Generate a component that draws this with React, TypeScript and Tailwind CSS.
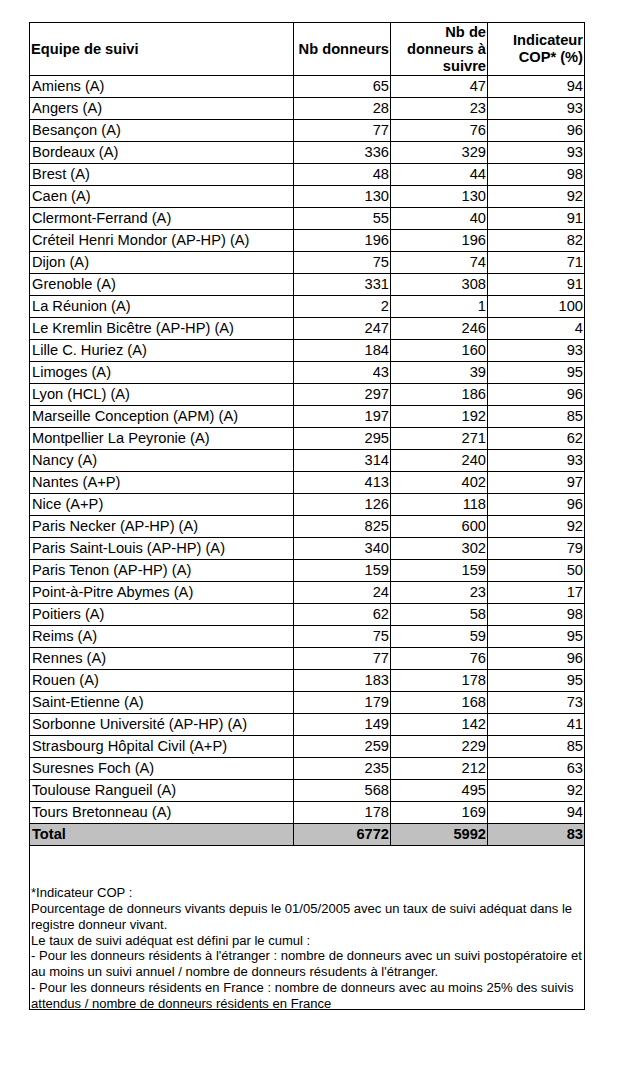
import React from "react";

const rows: [string, string, string, string][] = [
  ["Amiens (A)", "65", "47", "94"],
  ["Angers (A)", "28", "23", "93"],
  ["Besançon (A)", "77", "76", "96"],
  ["Bordeaux (A)", "336", "329", "93"],
  ["Brest (A)", "48", "44", "98"],
  ["Caen (A)", "130", "130", "92"],
  ["Clermont-Ferrand (A)", "55", "40", "91"],
  ["Créteil Henri Mondor (AP-HP) (A)", "196", "196", "82"],
  ["Dijon (A)", "75", "74", "71"],
  ["Grenoble (A)", "331", "308", "91"],
  ["La Réunion (A)", "2", "1", "100"],
  ["Le Kremlin Bicêtre (AP-HP) (A)", "247", "246", "4"],
  ["Lille C. Huriez (A)", "184", "160", "93"],
  ["Limoges (A)", "43", "39", "95"],
  ["Lyon (HCL) (A)", "297", "186", "96"],
  ["Marseille Conception (APM) (A)", "197", "192", "85"],
  ["Montpellier La Peyronie (A)", "295", "271", "62"],
  ["Nancy (A)", "314", "240", "93"],
  ["Nantes (A+P)", "413", "402", "97"],
  ["Nice (A+P)", "126", "118", "96"],
  ["Paris Necker (AP-HP) (A)", "825", "600", "92"],
  ["Paris Saint-Louis (AP-HP) (A)", "340", "302", "79"],
  ["Paris Tenon (AP-HP) (A)", "159", "159", "50"],
  ["Point-à-Pitre Abymes (A)", "24", "23", "17"],
  ["Poitiers (A)", "62", "58", "98"],
  ["Reims (A)", "75", "59", "95"],
  ["Rennes (A)", "77", "76", "96"],
  ["Rouen (A)", "183", "178", "95"],
  ["Saint-Etienne (A)", "179", "168", "73"],
  ["Sorbonne Université (AP-HP) (A)", "149", "142", "41"],
  ["Strasbourg Hôpital Civil (A+P)", "259", "229", "85"],
  ["Suresnes Foch (A)", "235", "212", "63"],
  ["Toulouse Rangueil (A)", "568", "495", "92"],
  ["Tours Bretonneau (A)", "178", "169", "94"],
];

const notes = [
  "*Indicateur COP :",
  "Pourcentage de donneurs vivants depuis le 01/05/2005 avec un taux de suivi adéquat dans le",
  "registre donneur vivant.",
  "Le taux de suivi adéquat est défini par le cumul :",
  "- Pour les donneurs résidents à l'étranger : nombre de donneurs avec un suivi postopératoire et",
  "au moins un suivi annuel / nombre de donneurs résudents à l'étranger.",
  "- Pour les donneurs résidents en France : nombre de donneurs avec au moins 25% des suivis",
  "attendus / nombre de donneurs résidents en France",
];

export default function App() {
  return (
    <div
      className="w-[624px] h-[1069px] bg-white text-black overflow-hidden"
      style={{ fontFamily: '"Liberation Sans", Arial, sans-serif' }}
    >
      <div className="pt-[22px] pl-[29px]">
        <div className="w-[556px] border-l border-t border-black">
          <div className="grid grid-cols-[264px_97px_97px_97px] text-[14.67px] font-bold leading-[17px]">
            <div className="h-[53px] border-r border-b border-black flex items-center pl-[1px]">
              Equipe de suivi
            </div>
            <div className="h-[53px] border-r border-b border-black flex items-center justify-end text-right pr-[1px]">
              Nb donneurs
            </div>
            <div className="h-[53px] border-r border-b border-black flex items-center justify-end text-right pr-[1px]">
              <span>
                Nb de
                <br />
                donneurs à
                <br />
                suivre
              </span>
            </div>
            <div className="h-[53px] border-r border-b border-black flex items-center justify-end text-right pr-[1px]">
              <span>
                Indicateur
                <br />
                COP* (%)
              </span>
            </div>
          </div>
          {rows.map((r) => (
            <div
              key={r[0]}
              className="grid grid-cols-[264px_97px_97px_97px] text-[14.67px] leading-[21px]"
            >
              <div className="h-[22px] border-r border-b border-black pl-[2px] whitespace-nowrap">
                {r[0]}
              </div>
              <div className="h-[22px] border-r border-b border-black text-right pr-[1px]">
                {r[1]}
              </div>
              <div className="h-[22px] border-r border-b border-black text-right pr-[1px]">
                {r[2]}
              </div>
              <div className="h-[22px] border-r border-b border-black text-right pr-[1px]">
                {r[3]}
              </div>
            </div>
          ))}
          <div className="grid grid-cols-[264px_97px_97px_97px] text-[14.67px] leading-[21px] font-bold bg-[#c0c0c0]">
            <div className="h-[22px] border-r border-b border-black pl-[2px]">Total</div>
            <div className="h-[22px] border-r border-b border-black text-right pr-[1px]">6772</div>
            <div className="h-[22px] border-r border-b border-black text-right pr-[1px]">5992</div>
            <div className="h-[22px] border-r border-b border-black text-right pr-[1px]">83</div>
          </div>
          <div className="h-[164px] border-r border-b border-black pt-[39px] pl-[1px] text-[13.05px] leading-[15.86px]">
            {notes.map((n) => (
              <div key={n} className="whitespace-nowrap">
                {n}
              </div>
            ))}
          </div>
        </div>
      </div>
    </div>
  );
}
